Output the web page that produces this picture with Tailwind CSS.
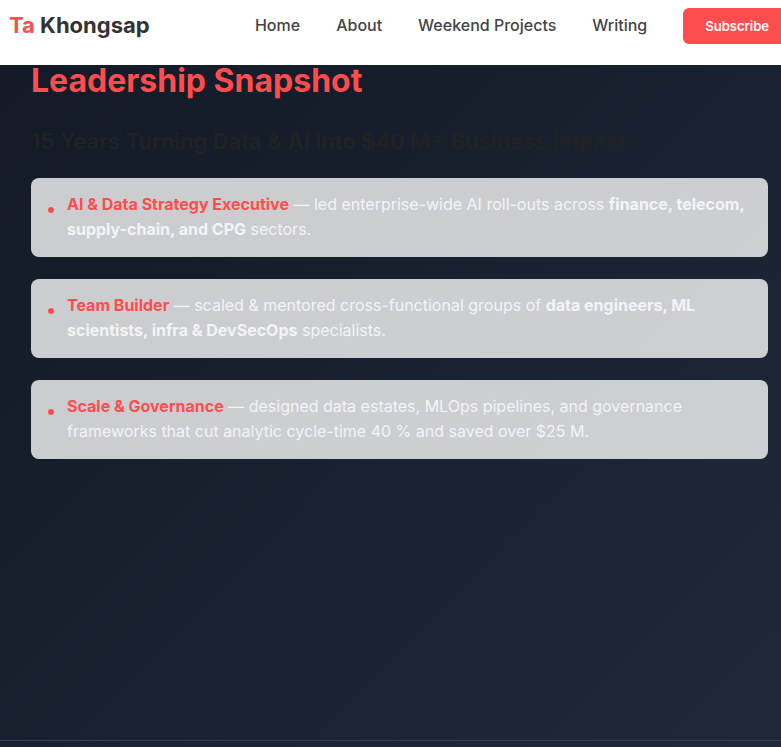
<!DOCTYPE html>
<html lang="en">
<head>
<meta charset="utf-8">
<meta name="viewport" content="width=device-width, initial-scale=1">
<title>Ta Khongsap</title>
<script src="https://cdn.jsdelivr.net/npm/@tailwindcss/browser@4"></script>
</head>
<body class="flex min-h-screen flex-col overflow-x-hidden bg-linear-135 from-[#131927] via-[#18212f] to-[#1f2937] font-['Inter',sans-serif] text-base text-[#f3f4f6]">
<header class="flex items-start justify-between bg-white pt-2 pb-[21px] pl-[9px]">
  <a href="#" class="flex h-[34px] shrink-0 items-center text-[22px] font-bold whitespace-pre text-[#333333]"><span class="text-[#ff4d4d]">Ta</span> Khongsap</a>
  <nav class="-mr-[10px] flex shrink-0 items-start gap-9 leading-[34px] font-medium text-[#444444]">
    <a href="#">Home</a>
    <a href="#">About</a>
    <a href="#">Weekend Projects</a>
    <a href="#">Writing</a>
    <button type="button" class="h-9 rounded-md bg-[#ff4d4d] px-[22px] text-[13px] font-semibold text-white">Subscribe</button>
  </nav>
</header>
<main class="flex-1 pr-[13px] pl-[31px]">
  <h1 class="text-[32px] leading-8 font-bold text-[#ff4d4d]">Leadership Snapshot</h1>
  <h2 class="mt-8 text-[22px] leading-6 font-semibold text-[#222222]">15 Years Turning Data &amp; AI Into $40 M+ Business Impact</h2>
  <ul class="mt-[25px] flex flex-col gap-[22px] leading-[25px]">
    <li class="flex gap-[13px] rounded-lg bg-white/78 pt-[14px] pr-3 pb-[15px] pl-[17px]">
      <span class="mt-[15px] size-[6px] shrink-0 rounded-full bg-[#ff4d4d]"></span>
      <p><strong class="font-bold text-[#ff4d4d]">AI &amp; Data Strategy Executive</strong> — led enterprise-wide AI roll-outs across <strong class="font-bold">finance, telecom, supply-chain, and CPG</strong> sectors.</p>
    </li>
    <li class="flex gap-[13px] rounded-lg bg-white/78 pt-[14px] pr-3 pb-[15px] pl-[17px]">
      <span class="mt-[15px] size-[6px] shrink-0 rounded-full bg-[#ff4d4d]"></span>
      <p><strong class="font-bold text-[#ff4d4d]">Team Builder</strong> — scaled &amp; mentored cross-functional groups of <strong class="font-bold">data engineers, ML scientists, infra &amp; DevSecOps</strong> specialists.</p>
    </li>
    <li class="flex gap-[13px] rounded-lg bg-white/78 pt-[14px] pr-3 pb-[15px] pl-[17px]">
      <span class="mt-[15px] size-[6px] shrink-0 rounded-full bg-[#ff4d4d]"></span>
      <p><strong class="font-bold text-[#ff4d4d]">Scale &amp; Governance</strong> — designed data estates, MLOps pipelines, and governance frameworks that cut analytic cycle-time 40 % and saved over $25 M.</p>
    </li>
  </ul>
</main>
<footer class="h-[7px] border-t border-[#374151]"></footer>
</body>
</html>
